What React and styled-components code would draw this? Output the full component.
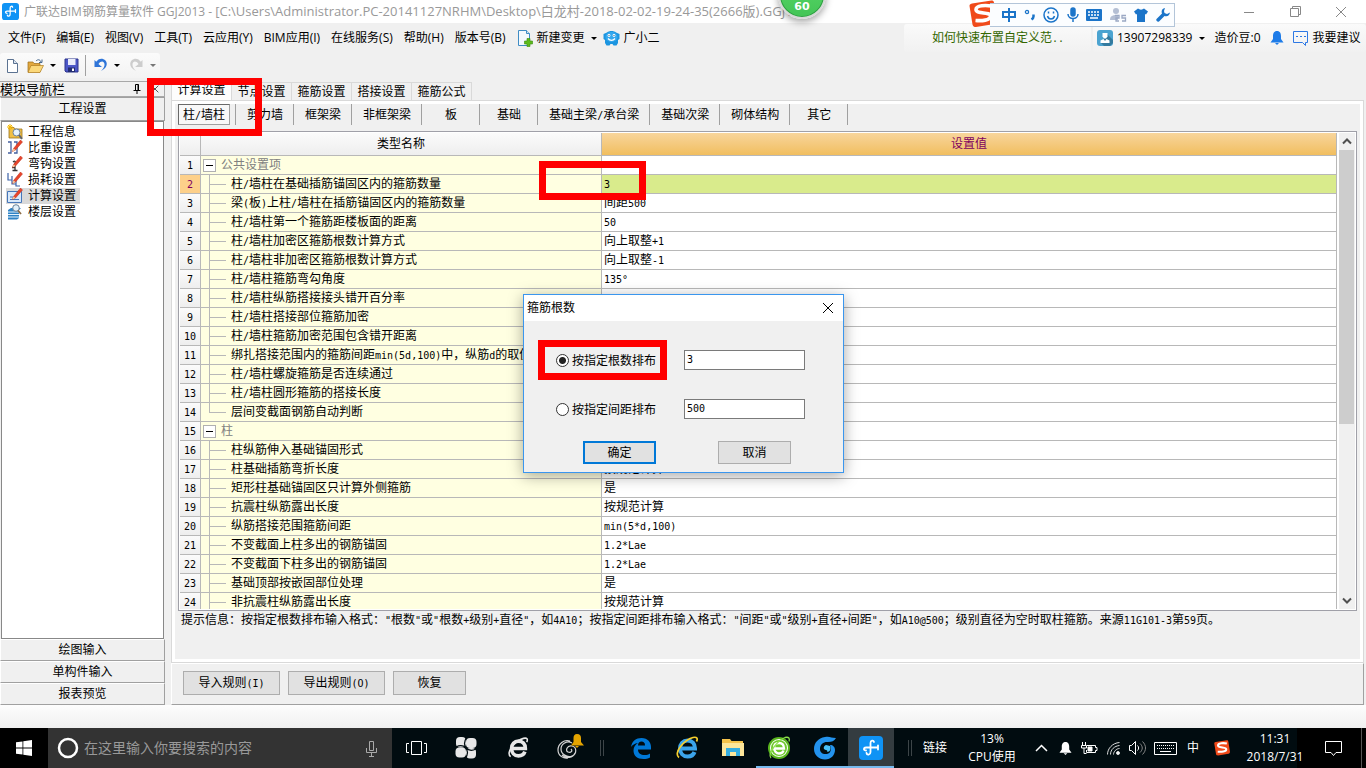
import { Fragment, useState } from "react";
import styled, { createGlobalStyle, css } from "styled-components";

const GlobalStyle = createGlobalStyle`
  * {
    box-sizing: border-box;
  }

  body {
    margin: 0;
    background: #f0f0f0;
    color: #000;
    font-family: "Open Sans", "Noto Sans CJK SC", sans-serif;
    font-size: 12px;
    line-height: 16px;
  }

  button, input {
    font: inherit;
    color: inherit;
  }

  button {
    padding: 0;
    border: 0;
    background: none;
    white-space: nowrap;
  }

  svg {
    display: block;
    flex: none;
  }
`;

const MENUS = ["文件(F)", "编辑(E)", "视图(V)", "工具(T)", "云应用(Y)", "BIM应用(I)", "在线服务(S)", "帮助(H)", "版本号(B)"];
const TABS = ["计算设置", "节点设置", "箍筋设置", "搭接设置", "箍筋公式"];
const PARTS = ["柱/墙柱", "剪力墙", "框架梁", "非框架梁", "板", "基础", "基础主梁/承台梁", "基础次梁", "砌体结构", "其它"];

const ROWS = [
  { name: "公共设置项", group: true },
  { name: "柱/墙柱在基础插筋锚固区内的箍筋数量", value: "3", active: true },
  { name: "梁(板)上柱/墙柱在插筋锚固区内的箍筋数量", value: "间距500" },
  { name: "柱/墙柱第一个箍筋距楼板面的距离", value: "50" },
  { name: "柱/墙柱加密区箍筋根数计算方式", value: "向上取整+1" },
  { name: "柱/墙柱非加密区箍筋根数计算方式", value: "向上取整-1" },
  { name: "柱/墙柱箍筋弯勾角度", value: "135°" },
  { name: "柱/墙柱纵筋搭接接头错开百分率" },
  { name: "柱/墙柱搭接部位箍筋加密" },
  { name: "柱/墙柱箍筋加密范围包含错开距离" },
  { name: "绑扎搭接范围内的箍筋间距min(5d,100)中，纵筋d的取值" },
  { name: "柱/墙柱螺旋箍筋是否连续通过" },
  { name: "柱/墙柱圆形箍筋的搭接长度" },
  { name: "层间变截面钢筋自动判断", last: true },
  { name: "柱", group: true },
  { name: "柱纵筋伸入基础锚固形式" },
  { name: "柱基础插筋弯折长度", value: "按规范计算" },
  { name: "矩形柱基础锚固区只计算外侧箍筋", value: "是" },
  { name: "抗震柱纵筋露出长度", value: "按规范计算" },
  { name: "纵筋搭接范围箍筋间距", value: "min(5*d,100)" },
  { name: "不变截面上柱多出的钢筋锚固", value: "1.2*Lae" },
  { name: "不变截面下柱多出的钢筋锚固", value: "1.2*Lae" },
  { name: "基础顶部按嵌固部位处理", value: "是" },
  { name: "非抗震柱纵筋露出长度", value: "按规范计算" },
];

/* ---------- text ---------- */

const HalfWidth = styled.span`
  font-family: "DejaVu Sans Mono", monospace;
  font-size: 10px;
  line-height: 10px;
  white-space: pre;
`;

// latin characters take half the width of a chinese one
const Song = ({ children }) =>
  children.split(/([\x20-\x7e°]+)/).map((part, i) =>
    i % 2 ? <HalfWidth key={i}>{part}</HalfWidth> : <Fragment key={i}>{part}</Fragment>
  );

/* ---------- window ---------- */

const Screen = styled.div`
  position: relative;
  display: flex;
  flex-direction: column;
  height: 100vh;
  overflow: hidden;
`;

const TitleBar = styled.header`
  display: flex;
  align-items: center;
  height: 23px;
  padding: 0 2px;
  background: #fff;
  color: #999;
  white-space: nowrap;
`;

const TitleText = styled.span`
  flex: 1;
  margin-left: 5px;
`;

const FilePath = styled.span`
  font-size: 13px;
`;

const WindowButton = styled.button`
  display: grid;
  place-items: center;
  width: 46px;
  height: 20px;
`;

const MenuBar = styled.nav`
  display: flex;
  align-items: center;
  height: 30px;
  padding-left: 8px;
  white-space: nowrap;
`;

const MenuButton = styled.button`
  display: flex;
  align-items: center;
  gap: 4px;
  margin-right: ${(p) => p.$space || 11}px;
`;

const Caret = styled.span`
  margin-left: ${(p) => p.$space || 0}px;
  border: 3px solid transparent;
  border-top-color: ${(p) => p.$color || "#000"};
  border-bottom: 0;
`;

const Strip = styled.div`
  display: flex;
  align-items: center;
  height: 28px;
  border-radius: 3px;
  background: linear-gradient(#fafafa, #f1f1f1);
`;

const Tip = styled(Strip)`
  width: 187px;
  margin-left: auto;
  margin-right: 2px;
  padding-left: 28px;

  a {
    color: #360;
    text-decoration: none;
  }
`;

const Account = styled(Strip)`
  width: 273px;
  padding-left: 4px;
`;

const ToolBar = styled.div`
  height: 27px;
`;

const Tools = styled(Strip)`
  width: 160px;
  height: 25px;
  padding-left: 4px;
  background: linear-gradient(#fbfbfb, #f3f3f3);
`;

const ToolButton = styled.button`
  display: flex;
  align-items: center;
  gap: 6px;
  margin-right: ${(p) => p.$space || 6}px;
`;

const Divider = styled.span`
  flex: none;
  width: 1px;
  height: 21px;
  margin-right: 7px;
  background: #a0a0a0;
`;

const Main = styled.main`
  display: flex;
  flex: 1;
  gap: 6px;
  min-height: 0;
  padding-right: 2px;
`;

const BottomEdge = styled.div`
  height: 23px;
  background: linear-gradient(#fdfdfd, #f0f0f0);
`;

/* ---------- sidebar ---------- */

const Sidebar = styled.aside`
  display: flex;
  flex-direction: column;
  flex: none;
  width: 165px;
`;

const SidebarHead = styled.div`
  display: flex;
  align-items: center;
  height: 16px;
  margin-top: 1px;
  border: 1px solid #a8a8a8;
  border-left: 0;
  font-size: 13px;

  span {
    flex: 1;
  }

  button {
    width: 18px;
    display: grid;
    place-items: center;
  }
`;

const SidebarButton = styled.button`
  height: ${(p) => p.$height || 22}px;
  border: 1px solid #a0a0a0;
  border-top-color: ${(p) => (p.$height ? "#a0a0a0" : "#fff")};
  border-left-color: #fff;
  background: #f0f0f0;
`;

const SidebarList = styled.ul`
  flex: 1;
  margin: 0 1px 0 1px;
  padding: 2px 4px;
  border: 1px solid #888;
  background: #fff;
  list-style: none;
`;

const SidebarItem = styled.li`
  display: flex;
  width: 74px;
  height: 16px;
  padding-left: 1px;
  background: ${(p) => (p.$selected ? "#d9d9d9" : "none")};

  button {
    display: flex;
    align-items: center;
    gap: 5px;
  }
`;

/* ---------- settings ---------- */

const Content = styled.section`
  display: flex;
  flex: 1;
  flex-direction: column;
  min-width: 0;
`;

const TabRow = styled.div`
  display: flex;
  align-items: flex-end;
  height: 20px;
`;

const Tab = styled.button`
  width: 60px;
  height: 18px;
  border: 1px solid #d9d9d9;
  border-left: 0;
  border-bottom: 0;

  ${(p) =>
    p.$selected &&
    css`
      width: 61px;
      height: 20px;
      padding-bottom: 2px;
      border-left: 1px solid #d9d9d9;
      background: #fdfdfd;
    `}
`;

const Panel = styled.div`
  display: flex;
  flex: 1;
  flex-direction: column;
  min-height: 0;
  padding: 3px 6px 0;
  border: 1px solid #d9d9d9;
  box-shadow: inset 0 0 0 3px #fff;
`;

const PartRow = styled.div`
  display: flex;
  height: 21px;
  margin-bottom: 6px;
`;

const PartCell = styled.div`
  display: grid;
  min-width: 58px;
  border-right: 1px solid #a0a0a0;

  button {
    padding: 0 10px 0 11px;
  }

  ${(p) =>
    p.$selected &&
    css`
      min-width: 57px;
      padding-right: 5px;

      button {
        padding: 0 4px;
        border: 1px solid #a0a0a0;
        border-top-color: #696969;
        border-left-color: #696969;
        background: #f8f8f8;
      }
    `}
`;

const GridFrame = styled.div`
  display: flex;
  flex: 1;
  min-height: 0;
  padding: 1px;
  overflow: hidden;
  border: 1px solid #a0a0a8;
  background: #fff;
`;

const GridBody = styled.div`
  flex: 1;
  overflow: hidden;
`;

const Grid = styled.table`
  width: 100%;
  table-layout: fixed;
  border-spacing: 0;

  th, td {
    height: 19px;
    padding: 0;
    border-right: 1px solid #b8b8b8;
    border-bottom: 1px solid #b8b8b8;
    font-weight: normal;
    white-space: nowrap;
    overflow: hidden;
  }

  thead th {
    height: 23px;
    background: linear-gradient(#fbfbfb, #eee);
  }

  thead th:last-child {
    background: linear-gradient(#f8d59c, #f1be5f);
    color: #800060;
  }
`;

const NumberCell = styled.th`
  background: ${(p) => (p.$active ? "#fdd08a" : "linear-gradient(#fbfbfb, #eee)")};
  color: ${(p) => (p.$active ? "#800060" : "#000")};
`;

const NameCell = styled.td`
  background: #ffffe1;
  color: ${(p) => (p.$group ? "#808080" : "#000")};
`;

const NameLine = styled.div`
  display: flex;
  align-items: center;
  height: 18px;
  padding-left: ${(p) => (p.$group ? 2 : 8)}px;
`;

const Fold = styled.button`
  width: 13px;
  height: 13px;
  margin-right: 5px;
  border: 1px solid #b0b0b0;
  background: linear-gradient(#000, #000) center / 7px 1px no-repeat #fff;
`;

const Branch = styled.span`
  width: 17px;
  height: 18px;
  margin-right: 5px;
  background:
    linear-gradient(#b8b8b8, #b8b8b8) 0 0 / 1px ${(p) => (p.$last ? "10px" : "100%")} no-repeat,
    linear-gradient(#b8b8b8, #b8b8b8) 0 9px / 17px 1px no-repeat;
`;

const ValueCell = styled.td`
  && {
    padding-left: 2px;
    background: ${(p) => (p.$active ? "#d9eb8c" : "#fff")};
  }
`;

const ScrollBar = styled.div`
  display: flex;
  flex-direction: column;
  flex: none;
  width: 16px;
  margin-left: 2px;
  background: #f0f0f0;

  button {
    display: grid;
    place-items: center;
    height: 17px;
  }
`;

const ScrollTrack = styled.div`
  flex: 1;

  &::before {
    content: "";
    display: block;
    height: 62%;
    margin-right: 1px;
    background: #cdcdcd;
  }
`;

const Hint = styled.p`
  height: 51px;
  margin: 0;
  padding: 1px 3px;
  white-space: nowrap;
  overflow: hidden;
`;

const Actions = styled.div`
  display: flex;
  gap: 8px;
  height: 42px;
  padding: 7px 11px;
  border: 1px solid #a0a0a0;
  border-top-color: #fff;
  border-left-color: #fff;
`;

const PushButton = styled.button`
  flex: none;
  width: ${(p) => (p.$wide ? 97 : 73)}px;
  height: ${(p) => (p.$short ? 23 : 24)}px;
  border: 1px solid #adadad;
  background: #e1e1e1;

  ${(p) => p.$default && "border: 2px solid #0078d7;"}
`;

/* ---------- dialog ---------- */

const DialogBox = styled.form`
  position: absolute;
  top: calc(50% - 90px);
  left: calc(50% - 160px);
  width: 321px;
  border: 1px solid #3a96ee;
  background: #f0f0f0;
  box-shadow: 0 3px 14px rgba(0, 0, 0, 0.35);
`;

const DialogTitle = styled.div`
  display: flex;
  align-items: center;
  justify-content: space-between;
  height: 26px;
  padding: 0 9px 0 3px;
  background: #fff;
`;

const Fields = styled.div`
  display: grid;
  grid-template-columns: 128px 121px;
  row-gap: 28px;
  padding: 29px 0 0 32px;
`;

const RadioLabel = styled.label`
  display: flex;
  align-items: center;
  gap: 3px;
  height: 21px;

  input {
    appearance: none;
    width: 13px;
    height: 13px;
    margin: 0;
    border: 1px solid #333;
    border-radius: 50%;
    background: #fff;
  }

  input:checked {
    background: radial-gradient(circle, #222 3px, #fff 4px);
  }
`;

const TextBox = styled.input`
  height: 20px;
  padding: 0 2px 2px;
  border: 1px solid #7a7a7a;
  background: #fff;
  font-family: "DejaVu Sans Mono", monospace;
  font-size: 10px;
`;

const DialogButtons = styled.div`
  display: flex;
  gap: 62px;
  padding: 21px 0 8px 59px;
`;

/* ---------- things floating over the window ---------- */

const Mark = styled.div`
  position: absolute;
  top: ${(p) => p.$top}px;
  left: ${(p) => p.$left}px;
  width: ${(p) => p.$width}px;
  height: ${(p) => p.$height}px;
  border: 7px solid #f00;
  pointer-events: none;
`;

const SpeedBall = styled.div`
  position: absolute;
  top: -29px;
  left: 778px;
  display: flex;
  align-items: flex-end;
  justify-content: center;
  width: 48px;
  height: 48px;
  border: 2px solid #d8d8d8;
  border-radius: 50%;
  background: linear-gradient(#5dd86a, #43c556);
  box-shadow: inset 0 0 0 1px #2f9c43, 0 3px 7px rgba(0, 0, 0, 0.35);
  color: #fff;
  font: bold 11px/20px "DejaVu Sans", sans-serif;
`;

const ImeBar = styled.div`
  position: absolute;
  top: 0;
  right: 191px;
  display: flex;
  align-items: center;
  height: 27px;
`;

const ImeTools = styled.div`
  display: flex;
  align-items: center;
  justify-content: space-between;
  width: 185px;
  height: 24px;
  margin: 3px 0 0 -7px;
  padding: 0 4px 0 12px;
  border: 1px solid #b3c5d9;
  border-left: 0;
  background: #fbfdff;
  color: #1b74c9;
`;

/* ---------- taskbar ---------- */

const TaskBar = styled.footer`
  display: flex;
  flex: none;
  align-items: stretch;
  height: 40px;
  background: linear-gradient(90deg, #000 0 392px, #010c10 392px calc(100% - 69px), #000 calc(100% - 69px));
  color: #fff;
`;

const TaskButton = styled.button`
  display: grid;
  place-items: center;
  width: ${(p) => p.$width || 46}px;
  background: ${(p) => (p.$active ? "#343c40" : "none")};
  ${(p) => p.$running && "box-shadow: inset 0 -2px 0 #76b9ed;"}
`;

const Search = styled.label`
  display: flex;
  align-items: center;
  width: 344px;
  padding: 0 14px 0 9px;
  background: #333;

  input {
    flex: 1;
    min-width: 0;
    margin-left: 5px;
    padding: 0;
    border: 0;
    background: none;
    font-size: 14px;
  }

  input::placeholder {
    color: #999;
    opacity: 1;
  }
`;

const Grip = styled.span`
  align-self: center;
  width: 4px;
  height: 16px;
  margin: ${(p) => p.$margin};
  border: 1px solid #3d4548;
  border-width: 0 1px;
`;

const Tray = styled.div`
  display: flex;
  align-items: center;
  margin-left: auto;
  white-space: nowrap;
`;

const TrayItem = styled.button`
  display: grid;
  place-items: center;
  width: ${(p) => p.$width || 24}px;
`;

const Stack = styled.div`
  width: ${(p) => p.$width}px;
  text-align: center;
  line-height: 18px;
`;

const ShowDesktop = styled.button`
  width: 5px;
  height: 40px;
  margin-left: 7px;
  border-left: 1px solid #555;
`;

/* ---------- icons ---------- */

const AppLogo = ({ size = 17 }) => (
  <svg width={size} height={size} viewBox="0 0 24 24">
    <rect width="24" height="24" rx="4" fill="#0f93f5" />
    <path d="M15 6C14.500 4 11.500 4 11.500 7v9c0 3-3.500 3.500-4 1M7 14.500c-3-.5-2.500-3 0-3h12M19 9.500v4" fill="none" stroke="#fff" strokeWidth="1.800" strokeLinecap="round" />
  </svg>
);

const CloseIcon = ({ color = "#888", size = 12 }) => (
  <svg width={size} height={size} viewBox="0 0 12 12" stroke={color} fill="none">
    <path d="M1 1l10 10M11 1L1 11" />
  </svg>
);

const NewChangeIcon = () => (
  <svg width="16" height="18" viewBox="0 0 16 18">
    <path d="M1.500 1.500h8l3 3v12h-11z" fill="#f4f9fd" stroke="#3f8cc4" />
    <path d="M9.500 1.500v3h3" fill="#cfe4f4" stroke="#3f8cc4" />
    <path d="M10 9.500h3v2.500h2.500v3H13v2.500h-3V15H7.500v-3H10z" fill="#5dbb1c" stroke="#3a8c10" strokeWidth=".6" />
  </svg>
);

const RobotIcon = () => (
  <svg width="17" height="17" viewBox="0 0 17 17">
    <path d="M4 2.500C6 .5 11 .5 13 2.500L16.500 4v5L15 10v3l-1.500 2.500h-3L9.500 14h-2l-1 1.500h-3L2 13v-3L.5 9V4z" fill="#1c95e0" />
    <ellipse cx="8.500" cy="7" rx="6" ry="5" fill="#35a8ee" />
    <circle cx="6" cy="5.500" r="1.400" fill="#fff" />
    <circle cx="11" cy="5.500" r="1.400" fill="#fff" />
    <circle cx="6" cy="5.500" r=".6" fill="#124a78" />
    <circle cx="11" cy="5.500" r=".6" fill="#124a78" />
    <path d="M5 8.500c2 2.500 5 2.500 7 0" fill="none" stroke="#fff" strokeWidth="1.300" />
  </svg>
);

const UserIcon = () => (
  <svg width="16" height="16" viewBox="0 0 16 16">
    <rect width="16" height="16" rx="3" fill="#4ba3d0" />
    <path d="M10 4l6 6v3l-3 3H7l-3-3z" fill="#347b9f" />
    <path d="M5.500 3h5v3.500L9 8.500H7L5.500 6.500z" fill="#fff" />
    <path d="M3.500 13v-2.500L6.500 9 8 11l1.500-2 3 1.500V13z" fill="#fff" />
  </svg>
);

const BellIcon = ({ color, size = 14 }) => (
  <svg width={size} height={size} viewBox="0 0 14 14" fill={color}>
    <path d="M7 0c3 0 4 2.500 4 5v3l2.500 3.500H.5L3 8V5c0-2.500 1-5 4-5zM5 12h4L7 14z" />
  </svg>
);

const ChatIcon = () => (
  <svg width="17" height="16" viewBox="0 0 17 16" fill="none" stroke="#2e78e4">
    <path d="M10.500 12.500h-9v-11h14v11h-2v3z" />
    <path d="M4 6.500h10" strokeDasharray="2 2" />
  </svg>
);

const NewFileIcon = () => (
  <svg width="16" height="16" viewBox="0 0 16 16">
    <path d="M3.500 1.500h6l4 4v9h-10z" fill="#fff" stroke="#5b7291" />
    <path d="M9.500 1.500v4h4" fill="#dbe5f1" stroke="#5b7291" />
  </svg>
);

const OpenIcon = () => (
  <svg width="17" height="16" viewBox="0 0 17 16">
    <path d="M1 4h5l1 1.500h6V14H1z" fill="#e2a83e" stroke="#9a6b19" strokeWidth=".7" />
    <path d="M4 7.500h12.500L13 14.500H1z" fill="#fbd87a" stroke="#b07c20" strokeWidth=".7" />
    <path d="M9 3c2-2 4-1.500 5 1M12 4.500h3V1.500" fill="none" stroke="#47698f" />
  </svg>
);

const SaveIcon = () => (
  <svg width="15" height="15" viewBox="0 0 15 15">
    <path d="M1 1h13v13H2l-1-1z" fill="#4c57c8" stroke="#2c348c" />
    <path d="M4 1h7.500v6H4z" fill="#e9ecfb" />
    <path d="M4 9.500h7V14H4z" fill="#222c70" />
    <path d="M8 10.500h2V13H8z" fill="#fff" />
  </svg>
);

const UndoIcon = ({ color, flip }) => (
  <svg width="15" height="15" viewBox="0 0 15 15">
    <path
      d="M3 4l2.500 2C8 2.500 11 3 11.500 6c.3 2.500-1 4.500-3.500 7 6-3 7-7.500 4.500-10.500C10 0 6 0 4 3M1.500 2v7H9L6 6.500 3.500 4z"
      transform={flip ? "matrix(-1 0 0 1 15 0)" : undefined}
      fill={color}
    />
  </svg>
);

const PinIcon = () => (
  <svg width="8" height="10" viewBox="0 0 8 10" fill="none" stroke="#000">
    <path d="M2.500 6V.5h3V6M5 .5V6M.5 6.500h7M4 7v3" />
  </svg>
);

const Pencil = () => (
  <g>
    <path d="M13.500 0l2 2-7 8-3 1.500 1-3z" fill="#e8452c" stroke="#b82a14" strokeWidth=".5" />
    <path d="M5.500 11.500l1-3 2 1.500z" fill="#f3d6a8" />
  </g>
);

const sidebarIcons = {
  工程信息: (
    <g>
      <path d="M2 3.500h5l1 1.500h7v9H2z" fill="#f0bf45" stroke="#9b7420" strokeWidth=".8" />
      <path d="M3 0v6M0 3h6M1 1l4 4M5 1L1 5" stroke="#f5b800" />
      <circle cx="9.500" cy="8.500" r="3.500" fill="#e5f2fc" stroke="#6d8299" />
      <path d="M12 11l3 4" stroke="#60656c" strokeWidth="2" />
    </g>
  ),
  比重设置: (
    <g>
      <path d="M1 2h3v11H1M7 2h3v11H7" fill="none" stroke="#44609f" strokeWidth="1.300" />
      <Pencil />
    </g>
  ),
  弯钩设置: (
    <g>
      <path d="M6 6c2-2 3 0 2 1v7M5.500 14.500h5M5 11.500h3" fill="none" stroke="#333" strokeWidth="1.300" />
      <Pencil />
    </g>
  ),
  损耗设置: (
    <g>
      <path d="M1 1v7h4V4v8h4V8v6h4" fill="none" stroke="#3c63a8" strokeWidth="1.200" />
      <Pencil />
    </g>
  ),
  计算设置: (
    <g>
      <path d="M.5 3.500h14v11H.5z" fill="#d8e9fb" stroke="#4677ba" />
      <path d="M3 9h3M3 11.500h9" stroke="#4677ba" />
      <Pencil />
    </g>
  ),
  楼层设置: (
    <g>
      <path d="M1 6l3-2h10l-2 2v8l-2 1.500H1z" fill="#2f83c5" />
      <path d="M1 8h11M1 10.500h11M1 13h11" stroke="#e5f3fd" />
      <circle cx="9" cy="4" r="3.300" fill="#e2f1fb" stroke="#68819a" />
      <path d="M11 6.500l3 3.500" stroke="#8b6b45" strokeWidth="1.800" />
    </g>
  ),
};

const SogouIcon = ({ size }) => (
  <svg width={size} height={size} viewBox="0 0 28 28">
    <path d="M3 3.500L22.500.5c1.500 0 2 .5 2.500 2l3 18c0 2-1 3-2.500 3.500L7 27c-2 0-3-.5-3.500-2.500L.5 6C.5 4.500 1 4 3 3.500z" fill="#f04a1a" />
    <path d="M22.500 6C17 5 7 5 7 9.500c0 5 14.500 2 14.500 6.500 0 4.500-9 5-15 4.500" fill="none" stroke="#fff" strokeWidth="3.600" />
  </svg>
);

const ChevronIcon = ({ up, color = "#505050" }) => (
  <svg width="10" height="7" viewBox="0 0 10 7" fill="none" stroke={color} strokeWidth="2">
    <path d={up ? "M1 5.500l4-4 4 4" : "M1 1.500l4 4 4-4"} />
  </svg>
);

const GlobeE = ({ color, ring, size = 24 }) => (
  <svg width={size} height={size} viewBox="0 0 24 24" fill="none">
    <path d="M6.500 12.500H20c0-5-3-8-7.500-8S5 8 5 12.500s3 8 7.500 8c3.500 0 6-1.500 7-4.500" stroke={color} strokeWidth="4" />
    <path d="M4 21.500C-2 17 9 4 18 1.500c4-1 5 1 3.500 4" stroke={ring} strokeWidth="1.700" />
  </svg>
);

const EdgeIcon = () => (
  <svg width="22" height="22" viewBox="0 0 22 22">
    <path d="M1 10C2 4 6 1 11.500 1 18 1 21 5.500 21 10v2.500H8c0 4 3 5.500 6.500 5.500 2.500 0 4-.5 5.500-1.500v4c-2 1-4 1.500-6.500 1.500C7 22 3.500 18.500 3.500 13.500 3.500 10 5.500 7.500 8 6c-3.500.5-5.500 2-7 4zm7-1.500h7c0-3-1.500-4-3.500-4s-3.500 1.500-3.500 4z" fill="#0078d7" />
  </svg>
);

const FanIcon = () => (
  <svg width="22" height="22" viewBox="0 0 22 22" fill="#e8e8e8">
    <rect x="1" width="10" height="10.500" rx="4" />
    <rect x="11" y="1" width="10.500" height="10" rx="4" />
    <rect x=".5" y="10.500" width="10.500" height="10" rx="4" />
    <rect x="11" y="11" width="10" height="10.500" rx="4" />
    <path d="M12 0c-3 4-3 8-1 11 3 3 6 3 10 1M10 22c3-4 3-8 1-11C8 8 5 8 1 10" fill="none" stroke="#010c10" strokeWidth="1.200" />
  </svg>
);

const SwirlBellIcon = () => (
  <svg width="30" height="30" viewBox="0 0 30 30">
    <path d="M17 10c-5-3-11 1-11 6s6 9 11 7 5-9 0-10-7 5-4 6 5-1 3-3M15 8C9 6 3 11 3 17s6 9 10 8M20 20c-2 5-9 6-13 2" fill="none" stroke="#d6d6d6" strokeWidth="1.200" />
    <path d="M22 1c3 0 4 2 4 4v4l3 3.500H16l2.500-3.500V5c0-2 1-4 3.500-4zM20 13h4l-2 2z" fill="#e4a400" />
  </svg>
);

const BlueSwirl = () => (
  <svg width="24" height="24" viewBox="0 0 24 24">
    <path d="M23 2c-5 0-6-2-11-1C5 2 1 7 1 13c0 6 5 10.500 11 10.500S22 19 22 14c0-3-2-5-5-5 0 0 3 8-3 9-5 .5-7-2-7-5 0-5 4-7.500 8-7 4 0 6-1 8-4z" fill="#2393ee" />
    <path d="M13 9c-3 1-3 5 0 5 1 0 2 1 1 2 3 0 4-3 3-6z" fill="#48c2fb" />
  </svg>
);

const FolderIcon = () => (
  <svg width="22" height="20" viewBox="0 0 22 20">
    <path d="M0 1h8l1.500 2H21v15H0z" fill="#f5c34b" />
    <path d="M0 5h22v13H0z" fill="#fde69a" />
    <path d="M4 18v-8h14v8h-4v-4H8v4z" fill="#35ade0" />
  </svg>
);

const Lines = ({ d, width = 20, height = 16, color = "#fff", weight = 1 }) => (
  <svg width={width} height={height} viewBox={`0 0 ${width} ${height}`} fill="none" stroke={color} strokeWidth={weight}>
    <path d={d} />
  </svg>
);

const ImeIcons = () => (
  <>
    <Lines width={14} height={14} color="currentColor" weight={2} d="M1 4h12v5H1zM7 0v14" />
    <svg width="12" height="12" viewBox="0 0 12 12" fill="none" stroke="currentColor">
      <circle cx="3" cy="3" r="1.600" strokeWidth="1.300" />
      <path d="M9.500 5.500v2c0 1.500-.5 2-2 3" strokeWidth="2.500" />
    </svg>
    <svg width="16" height="16" viewBox="0 0 16 16" fill="none" stroke="currentColor" strokeWidth="1.500">
      <circle cx="8" cy="8" r="7" />
      <path d="M4.500 9c1 4 6 4 7 0M5.500 4.500v2M10.500 4.500v2" />
    </svg>
    <svg width="12" height="16" viewBox="0 0 12 16" fill="none" stroke="currentColor" strokeWidth="1.500">
      <rect x="4" y="1" width="4" height="8" rx="2" fill="currentColor" />
      <path d="M1 7c0 6 10 6 10 0M6 11.500V15" />
    </svg>
    <svg width="16" height="12" viewBox="0 0 16 12">
      <rect width="16" height="12" rx="1" fill="currentColor" />
      <path d="M2 3h12M2 6h12" stroke="#fff" strokeWidth="1.500" strokeDasharray="2 1" />
      <path d="M4 9h8" stroke="#fff" strokeWidth="1.500" />
    </svg>
    <svg width="17" height="16" viewBox="0 0 17 16">
      <circle cx="6" cy="4" r="3" fill="#b4bfd4" />
      <path d="M0 13c0-5 4-5 8-5v5z" fill="#b4bfd4" />
      <path d="M5 8.500h4v2.500H6v3h3M16 8.500h-4V11h3.500v3H12" fill="none" stroke="#9aa8c4" strokeWidth="1.300" />
    </svg>
    <svg width="14" height="14" viewBox="0 0 14 14" fill="currentColor">
      <path d="M4 .5c1.500 1.500 4.500 1.500 6 0l4 3-2 3-1-.5v8H3V6l-1 .5-2-3z" />
    </svg>
    <svg width="14" height="14" viewBox="0 0 14 14" fill="currentColor">
      <path d="M9 0C6 .5 5 3 6 5.500L.5 11c-1 1.500 1 3.500 2.500 2.500L8.500 8c3 1 5-.5 5.500-3.500l-3 1.500L8.500 5 8 3z" />
    </svg>
  </>
);

/* ---------- sections ---------- */

const Header = () => (
  <>
    <TitleBar>
      <AppLogo />
      <TitleText>
        广联达BIM钢筋算量软件 GGJ2013 -{" "}
        <FilePath>
          [C:\Users\Administrator.PC-20141127NRHM\Desktop\白龙村-2018-02-02-19-24-35(2666版).GGJ12]
        </FilePath>
      </TitleText>
      <WindowButton aria-label="最小化">
        <Lines width={10} height={10} color="#888" d="M0 5.500h10" />
      </WindowButton>
      <WindowButton aria-label="还原">
        <Lines width={11} height={11} color="#888" d="M.5 2.500h8v8h-8zM2.500 2.500v-2h8v8h-2" />
      </WindowButton>
      <WindowButton aria-label="关闭">
        <CloseIcon />
      </WindowButton>
    </TitleBar>
    <MenuBar>
      {MENUS.map((menu) => (
        <MenuButton key={menu}>{menu}</MenuButton>
      ))}
      <MenuButton $space={6}>
        <NewChangeIcon />
        新建变更
        <Caret $space={2} />
      </MenuButton>
      <MenuButton>
        <RobotIcon />
        广小二
      </MenuButton>
      <Tip>
        <a href="#help">
          <Song>如何快速布置自定义范..</Song>
        </a>
      </Tip>
      <Account>
        <MenuButton $space={9}>
          <UserIcon />
          13907298339
          <Caret $space={3} />
        </MenuButton>
        <MenuButton $space={9}>造价豆:0</MenuButton>
        <MenuButton $space={8} aria-label="消息">
          <BellIcon color="#1e7ce8" />
        </MenuButton>
        <MenuButton $space={4}>
          <ChatIcon />
          我要建议
        </MenuButton>
      </Account>
    </MenuBar>
    <ToolBar>
      <Tools>
        <ToolButton $space={7} aria-label="新建">
          <NewFileIcon />
        </ToolButton>
        <ToolButton $space={8} aria-label="打开">
          <OpenIcon />
          <Caret />
        </ToolButton>
        <ToolButton aria-label="保存">
          <SaveIcon />
        </ToolButton>
        <Divider />
        <ToolButton $space={9} aria-label="撤销">
          <UndoIcon color="#2f75d8" />
          <Caret />
        </ToolButton>
        <ToolButton aria-label="恢复">
          <UndoIcon color="#cdcdcd" flip />
          <Caret $color="#777" />
        </ToolButton>
      </Tools>
    </ToolBar>
  </>
);

const Navigator = () => (
  <Sidebar>
    <SidebarHead>
      <span>模块导航栏</span>
      <button aria-label="固定">
        <PinIcon />
      </button>
      <button aria-label="关闭导航栏">
        <CloseIcon color="#000" size={8} />
      </button>
    </SidebarHead>
    <SidebarButton $height={24}>工程设置</SidebarButton>
    <SidebarList>
      {Object.entries(sidebarIcons).map(([name, icon]) => (
        <SidebarItem key={name} $selected={name === "计算设置"}>
          <button>
            <svg width="16" height="16" viewBox="0 0 16 16">
              {icon}
            </svg>
            {name}
          </button>
        </SidebarItem>
      ))}
    </SidebarList>
    <SidebarButton>绘图输入</SidebarButton>
    <SidebarButton>单构件输入</SidebarButton>
    <SidebarButton>报表预览</SidebarButton>
  </Sidebar>
);

const SettingsGrid = () => (
  <GridFrame>
    <GridBody>
      <Grid>
        <colgroup>
          <col style={{ width: 21 }} />
          <col style={{ width: 401 }} />
          <col />
        </colgroup>
        <thead>
          <tr>
            <th aria-label="序号" />
            <th>类型名称</th>
            <th>设置值</th>
          </tr>
        </thead>
        <tbody>
          {ROWS.map((row, i) => (
            <tr key={row.name}>
              <NumberCell $active={row.active}>
                <Song>{String(i + 1)}</Song>
              </NumberCell>
              <NameCell $group={row.group}>
                <NameLine $group={row.group}>
                  {row.group ? <Fold aria-label="折叠" /> : <Branch $last={row.last} />}
                  <span>
                    <Song>{row.name}</Song>
                  </span>
                </NameLine>
              </NameCell>
              <ValueCell $active={row.active}>
                <Song>{row.value || ""}</Song>
              </ValueCell>
            </tr>
          ))}
        </tbody>
      </Grid>
    </GridBody>
    <ScrollBar>
      <button aria-label="向上滚动">
        <ChevronIcon up />
      </button>
      <ScrollTrack />
      <button aria-label="向下滚动">
        <ChevronIcon />
      </button>
    </ScrollBar>
  </GridFrame>
);

const Settings = () => (
  <Content>
    <TabRow>
      {TABS.map((tab, i) => (
        <Tab key={tab} $selected={i === 0}>
          {tab}
        </Tab>
      ))}
    </TabRow>
    <Panel>
      <PartRow>
        {PARTS.map((part, i) => (
          <PartCell key={part} $selected={i === 0}>
            <button>
              <Song>{part}</Song>
            </button>
          </PartCell>
        ))}
      </PartRow>
      <SettingsGrid />
      <Hint>
        <Song>
          {'提示信息：按指定根数排布输入格式："根数"或"根数+级别+直径"，如4A10；按指定间距排布输入格式："间距"或"级别+直径+间距"，如A10@500；级别直径为空时取柱箍筋。来源11G101-3第59页。'}
        </Song>
      </Hint>
    </Panel>
    <Actions>
      <PushButton $wide>
        <Song>导入规则(I)</Song>
      </PushButton>
      <PushButton $wide>
        <Song>导出规则(O)</Song>
      </PushButton>
      <PushButton>恢复</PushButton>
    </Actions>
  </Content>
);

const StirrupDialog = () => {
  const [mode, setMode] = useState("count");
  return (
    <DialogBox role="dialog" aria-label="箍筋根数" onSubmit={(e) => e.preventDefault()}>
      <DialogTitle>
        箍筋根数
        <button type="button" aria-label="关闭对话框">
          <CloseIcon color="#000" />
        </button>
      </DialogTitle>
      <Fields>
        <RadioLabel>
          <input type="radio" name="mode" checked={mode === "count"} onChange={() => setMode("count")} />
          按指定根数排布
        </RadioLabel>
        <TextBox aria-label="根数" defaultValue="3" />
        <RadioLabel>
          <input type="radio" name="mode" checked={mode === "spacing"} onChange={() => setMode("spacing")} />
          按指定间距排布
        </RadioLabel>
        <TextBox aria-label="间距" defaultValue="500" />
      </Fields>
      <DialogButtons>
        <PushButton $short $default>
          确定
        </PushButton>
        <PushButton $short type="button">
          取消
        </PushButton>
      </DialogButtons>
    </DialogBox>
  );
};

const Taskbar = () => (
  <TaskBar>
    <TaskButton $width={48} aria-label="开始">
      <svg width="16" height="16" viewBox="0 0 16 16" fill="#fff">
        <path d="M0 2.300L6.500 1.400v6.200H0zM7.300 1.200L16 0v7.600H7.300zM0 8.400h6.500v6.200L0 13.700zM7.300 8.400H16V16l-8.700-1.200z" />
      </svg>
    </TaskButton>
    <Search>
      <svg width="22" height="22" viewBox="0 0 22 22" fill="none" stroke="#fff" strokeWidth="2.500">
        <circle cx="11" cy="11" r="9" />
      </svg>
      <input placeholder="在这里输入你要搜索的内容" aria-label="搜索" />
      <Lines width={13} height={17} color="#aaa" d="M4.500 1.500h4v9h-4zM1.500 8v4.500h10V8M6.500 13v3.500M4 16.500h5" />
    </Search>
    <TaskButton $width={48} aria-label="任务视图">
      <Lines width={21} height={16} d="M5.500 1.500h10v13h-10zM3 3.500H.5v9H3M18 3.500h2.500v9H18" />
    </TaskButton>
    <TaskButton $width={52} aria-label="助手">
      <FanIcon />
    </TaskButton>
    <TaskButton $width={52} aria-label="浏览器">
      <GlobeE color="#e8e8e8" ring="#e8e8e8" size={22} />
    </TaskButton>
    <TaskButton $width={52} aria-label="提醒">
      <SwirlBellIcon />
    </TaskButton>
    <Grip $margin="0 14px 0 4px" />
    <TaskButton aria-label="Edge">
      <EdgeIcon />
    </TaskButton>
    <TaskButton aria-label="Internet Explorer">
      <GlobeE color="#3ba4ea" ring="#f7cf2d" />
    </TaskButton>
    <TaskButton aria-label="文件资源管理器">
      <FolderIcon />
    </TaskButton>
    <TaskButton aria-label="安全浏览器" $running>
      <svg width="24" height="24" viewBox="0 0 24 24" fill="none">
        <circle cx="12" cy="12" r="10" fill="#fff" stroke="#59b51e" strokeWidth="2" />
        <circle cx="12" cy="12" r="8" fill="#6fc82e" />
        <path d="M8 12.500h9c0-4-2-5.500-5-5.500s-5 2-5 5 2.500 5.500 5 5.500c2 0 4-1 4.500-3" stroke="#fff" strokeWidth="2.300" />
        <path d="M4 22C0 18 11 4 18 1.500c4-1 5 1 4 4" stroke="#8ce04b" strokeWidth="1.300" />
      </svg>
    </TaskButton>
    <TaskButton aria-label="广联达" $running>
      <BlueSwirl />
    </TaskButton>
    <TaskButton aria-label="钢筋算量软件" $active $running>
      <AppLogo size={24} />
    </TaskButton>
    <Tray>
      <Grip $margin="0 3px 0 0" />
      <Stack $width={40}>链接</Stack>
      <Stack $width={74}>
        13%
        <br />
        CPU使用
      </Stack>
      <TrayItem aria-label="显示隐藏的图标">
        <Lines width={13} height={8} weight={1.5} d="M1 7l5.500-5.500L12 7" />
      </TrayItem>
      <TrayItem aria-label="通知">
        <BellIcon color="#fff" size={13} />
      </TrayItem>
      <TrayItem aria-label="电源">
        <svg width="17" height="13" viewBox="0 0 17 13" fill="none" stroke="#fff">
          <path d="M6 3.500h8.500v2H16v3h-1.500v2h-9V8M1.500 0v3M4.500 0v3M.5 3.500h5V6h-5zM3 6v5.500h2.500" />
          <path d="M7 5h4v4H7z" fill="#fff" />
        </svg>
      </TrayItem>
      <TrayItem aria-label="网络">
        <svg width="13" height="13" viewBox="0 0 13 13" fill="none" stroke="#ddd">
          <path d="M.5 12.500c0-6 5-11.500 12-12M3.500 12.500c0-5 4-8.500 9-9M6.500 12.500c0-3 3-6 6-6" />
          <circle cx="11" cy="11" r="1.500" fill="#fff" />
        </svg>
      </TrayItem>
      <TrayItem aria-label="音量">
        <svg width="17" height="14" viewBox="0 0 17 14" fill="none" stroke="#fff">
          <path d="M.5 4.500h2l4-4v13l-4-4h-2zM8.500 4.500c1.500 1.500 1.500 3.500 0 5" />
          <path d="M11 2.500c3 3 3 6 0 9M13.500.5c4 4 4 9 0 13" stroke="#888" />
        </svg>
      </TrayItem>
      <TrayItem $width={32} aria-label="触摸键盘">
        <svg width="23" height="13" viewBox="0 0 23 13" fill="none" stroke="#fff">
          <path d="M.5.5h22v12H.5zM6 9.500h11" />
          <path d="M3 3.500h18M3 6.500h18" strokeDasharray="1 1" />
        </svg>
      </TrayItem>
      <TrayItem>中</TrayItem>
      <TrayItem $width={33} aria-label="输入法">
        <SogouIcon size={16} />
      </TrayItem>
      <Stack $width={74}>
        11:31
        <br />
        2018/7/31
      </Stack>
      <TrayItem $width={42} aria-label="操作中心">
        <Lines width={17} height={17} d="M.5 1.500h16v11H11l-2.500 3-2.500-3H.5z" />
      </TrayItem>
      <ShowDesktop aria-label="显示桌面" />
    </Tray>
  </TaskBar>
);

const App = () => (
  <Screen>
    <GlobalStyle />
    <Header />
    <Main>
      <Navigator />
      <Settings />
    </Main>
    <BottomEdge />
    <Taskbar />
    <SpeedBall>60</SpeedBall>
    <ImeBar>
      <SogouIcon size={28} />
      <ImeTools>
        <ImeIcons />
      </ImeTools>
    </ImeBar>
    <StirrupDialog />
    <Mark $left={147} $top={78} $width={115} $height={58} />
    <Mark $left={539} $top={161} $width={107} $height={39} />
    <Mark $left={538} $top={340} $width={129} $height={40} />
  </Screen>
);

export default App;
